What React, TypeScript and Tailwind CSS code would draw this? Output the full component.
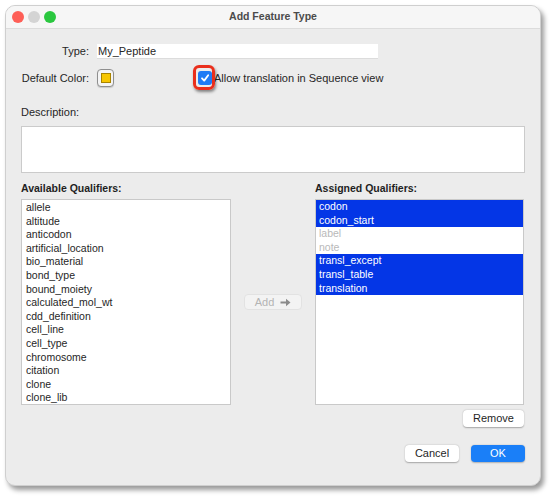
import React from "react";

const AVAILABLE = [
  "allele",
  "altitude",
  "anticodon",
  "artificial_location",
  "bio_material",
  "bond_type",
  "bound_moiety",
  "calculated_mol_wt",
  "cdd_definition",
  "cell_line",
  "cell_type",
  "chromosome",
  "citation",
  "clone",
  "clone_lib",
];

const ASSIGNED = [
  { name: "codon", selected: true },
  { name: "codon_start", selected: true },
  { name: "label", selected: false },
  { name: "note", selected: false },
  { name: "transl_except", selected: true },
  { name: "transl_table", selected: true },
  { name: "translation", selected: true },
];

const FONT = { fontFamily: '"Liberation Sans", Arial, sans-serif' };

function ArrowRight() {
  return (
    <svg width="11" height="9" viewBox="0 0 11 9" className="ml-[6px]">
      <path d="M0.5 3.4 H6 V0.8 L10.5 4.5 L6 8.2 V5.6 H0.5 Z" fill="#8c8c8c" />
    </svg>
  );
}

export default function App() {
  return (
    <div className="min-h-[498px] w-[552px] bg-white pt-[5px] pl-[5px]" style={FONT}>
      <div className="flex h-[481px] w-[536px] flex-col overflow-hidden rounded-[10px] border border-[#cfcfcf] bg-[#ececec] text-[11px] text-[#262626] shadow-[3px_4px_5px_rgba(0,0,0,0.4)]">
        {/* Title bar */}
        <div className="relative flex h-[23px] shrink-0 items-center border-b border-[#dcdcdc] bg-[#f6f6f6] pl-[6px]">
          <div className="flex gap-[4px]">
            <span className="h-[12px] w-[12px] rounded-full bg-[#fe5f57]" />
            <span className="h-[12px] w-[12px] rounded-full bg-[#d4d4d4]" />
            <span className="h-[12px] w-[12px] rounded-full bg-[#2ac73f]" />
          </div>
          <div className="absolute inset-x-0 top-0 flex h-[22px] items-center justify-center text-[10.5px] font-bold text-[#4b4b4b]">
            Add Feature Type
          </div>
        </div>

        {/* Body */}
        <div className="flex flex-col px-[15px]">
          {/* Type */}
          <div className="mt-[15px] flex h-[15px] items-center">
            <div className="flex w-[68px] justify-end whitespace-nowrap">Type:</div>
            <div className="ml-[8px] flex h-[15px] w-[281px] items-center border-b border-[#dcdcdc] bg-white pl-[1px]">
              My_Peptide
            </div>
          </div>

          {/* Default color + checkbox */}
          <div className="mt-[10px] flex h-[18px] items-center">
            <div className="flex w-[68px] justify-end whitespace-nowrap">Default Color:</div>
            <div className="ml-[8px] flex h-[18px] w-[17px] items-center justify-center rounded-[4px] border border-[#8f8f8f] bg-[#f4f4f4] shadow-[0_1px_1px_rgba(0,0,0,0.15)]">
              <span className="h-[10px] w-[10px] border border-[#a88300] bg-[#f7c600]" />
            </div>
            <div className="relative ml-[84px] flex h-[14px] w-[14px] items-center justify-center rounded-[3px] bg-[#1f7bf5]">
              <span className="absolute -left-[5px] -top-[6px] h-[25px] w-[22px] rounded-[6px] border-[3px] border-[#ea2f1c] shadow-[1px_2px_3px_rgba(0,0,0,0.45)]" />
              <svg width="10" height="10" viewBox="0 0 10 10">
                <path d="M2 5.3 L4.2 7.6 L8.2 2.3" fill="none" stroke="white" strokeWidth="1.8" strokeLinecap="round" strokeLinejoin="round" />
              </svg>
            </div>
            <div className="ml-[2px]">Allow translation in Sequence view</div>
          </div>

          {/* Description */}
          <div className="mt-[18px] leading-[14px]">Description:</div>
          <div className="mt-[7px] h-[47px] w-full border border-[#cbcbcb] bg-white" />

          {/* Qualifiers */}
          <div className="mt-[8px] flex">
            <div className="flex w-[210px] flex-col">
              <div className="text-[10.5px] font-bold leading-[14px] text-[#1f1f1f]">Available Qualifiers:</div>
              <div className="mt-[4px] h-[206px] border border-[#c9c9c9] bg-white pl-[4px] pt-[1px] text-[10.5px] leading-[13.6px]">
                {AVAILABLE.map((q) => (
                  <div key={q}>{q}</div>
                ))}
              </div>
            </div>

            <div className="flex w-[84px] items-center justify-center pt-[18px]">
              <div className="flex h-[16px] w-[58px] items-center justify-center rounded-[4px] border border-[#e2e2e2] bg-[#f3f3f3] text-[11px] text-[#b4b4b4]">
                Add
                <ArrowRight />
              </div>
            </div>

            <div className="flex w-[209px] flex-col">
              <div className="text-[10.5px] font-bold leading-[14px] text-[#1f1f1f]">Assigned Qualifiers:</div>
              <div className="mt-[4px] h-[206px] border border-[#c9c9c9] bg-white text-[10.5px] leading-[13.6px]">
                {ASSIGNED.map((q) => (
                  <div
                    key={q.name}
                    className={q.selected ? "bg-[#0436e6] pl-[3px] text-white" : "pl-[3px] text-[#b9b9b9]"}
                  >
                    {q.name}
                  </div>
                ))}
              </div>
            </div>
          </div>

          {/* Remove */}
          <div className="mt-[5px] flex justify-end pr-[1px]">
            <div className="flex h-[17px] w-[61px] items-center justify-center rounded-[4px] bg-white text-[11px] text-[#1f1f1f] shadow-[0_0.5px_1.5px_rgba(0,0,0,0.3)]">
              Remove
            </div>
          </div>

          {/* Footer buttons */}
          <div className="mt-[18px] flex justify-end gap-[12px]">
            <div className="flex h-[17px] w-[54px] items-center justify-center rounded-[4px] bg-white text-[11px] text-[#1f1f1f] shadow-[0_0.5px_1.5px_rgba(0,0,0,0.3)]">
              Cancel
            </div>
            <div className="flex h-[17px] w-[54px] items-center justify-center rounded-[4px] bg-[#1a7ff8] text-[11px] text-white shadow-[0_0.5px_1.5px_rgba(0,0,0,0.25)]">
              OK
            </div>
          </div>
        </div>
      </div>
    </div>
  );
}
